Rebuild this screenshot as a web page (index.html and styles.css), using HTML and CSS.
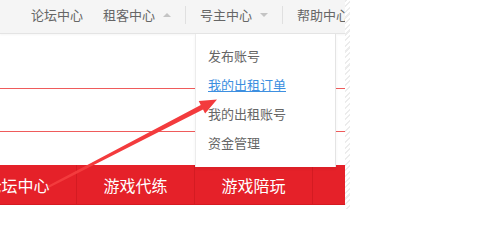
FILE: index.html
```html
<!DOCTYPE html>
<html lang="zh-CN">
<head>
<meta charset="utf-8">
<title>租号</title>
<link rel="stylesheet" href="styles.css">
</head>
<body>
<div class="page">
  <div class="site">
    <div class="topbar">
      <span class="tb-item first">论坛中心</span>
      <span class="tb-item">租客中心</span>
      <span class="caret up"></span>
      <span class="sep"></span>
      <span class="tb-item">号主中心</span>
      <span class="caret down"></span>
      <span class="sep"></span>
      <span class="tb-item">帮助中心</span>
    </div>
    <div class="content">
      <div class="row row1"></div>
      <div class="row row2"></div>
      <div class="row row3"></div>
    </div>
    <div class="nav">
      <span class="nav-item">论坛中心</span>
      <span class="nav-item">游戏代练</span>
      <span class="nav-item">游戏陪玩</span>
      <span class="nav-item"></span>
    </div>
    <ul class="dropdown">
      <li>发布账号</li>
      <li class="active">我的出租订单</li>
      <li>我的出租账号</li>
      <li>资金管理</li>
    </ul>
    <svg class="arrow" width="345" height="209" viewBox="0 0 345 209">
      <polygon points="47.54,186.11 200.75,105.1 198.7,101.1 217,99.5 205.1,113.5 203.05,109.5 48.46,187.89" fill="#f33b3d"/>
    </svg>
  </div>
  <div class="stripe"></div>
</div>
</body>
</html>
```
FILE: styles.css
```css
* { box-sizing: border-box; }
html, body { margin: 0; padding: 0; background: #fff; }
body {
  font-family: "Noto Sans CJK SC", "Noto Sans", sans-serif;
  width: 500px;
  height: 209px;
  overflow: hidden;
}
.page {
  display: flex;
  height: 209px;
}
.site {
  position: relative;
  width: 345px;
  height: 209px;
  overflow: hidden;
  flex: none;
}
.stripe {
  width: 5px;
  height: 209px;
  background: repeating-linear-gradient(135deg, #ececec 0 1.5px, #fff 1.5px 4px);
  flex: none;
}
.topbar {
  height: 34px;
  background: #f5f5f5;
  border-bottom: 1px solid #e4e4e4;
  box-shadow: 0 1px 2px rgba(0,0,0,0.04);
  display: flex;
  align-items: center;
  padding-left: 31px;
  white-space: nowrap;
  font-size: 13px;
  color: #666;
  padding-bottom: 3px;
}
.tb-item { flex: none; line-height: 16px; }
.tb-item + .tb-item { margin-left: 20px; }
.caret {
  width: 0;
  height: 0;
  margin-left: 8px;
  border-left: 4px solid transparent;
  border-right: 4px solid transparent;
  flex: none;
}
.caret.up { border-bottom: 4px solid #c4c4c4; }
.caret.down { border-top: 4px solid #c4c4c4; }
.sep {
  width: 1px;
  height: 18px;
  background: #e0e0e0;
  margin: 0 14px;
  flex: none;
}
.sep + .tb-item { margin-left: 0; }
.content {
  height: 131px;
  display: flex;
  flex-direction: column;
}
.row { flex: none; }
.row1 { height: 55px; border-bottom: 1px solid #ef5b5b; }
.row2 { height: 43px; border-bottom: 1px solid #ef5b5b; }
.row3 { height: 33px; }
.nav {
  height: 40px;
  background: #e52129;
  border-bottom: 1px solid #d51a21;
  display: flex;
  margin-left: -41px;
}
.nav-item {
  flex: none;
  width: 118px;
  border-right: 1px solid #d41b22;
  color: #fff;
  font-size: 16px;
  display: flex;
  align-items: center;
  justify-content: center;
}
.dropdown {
  position: absolute;
  left: 195px;
  top: 34px;
  width: 141px;
  height: 133px;
  margin: 0;
  padding: 7px 0 0 12px;
  list-style: none;
  background: #fff;
  border-left: 1px solid #ececec;
  border-right: 1px solid #e4e4e4;
  box-shadow: 0 2px 3px rgba(0,0,0,0.05);
  z-index: 2;
}
.dropdown li {
  font-size: 13px;
  line-height: 29px;
  color: #666;
}
.dropdown li.active {
  color: #3d8fe0;
  text-decoration: underline;
}
.arrow {
  position: absolute;
  left: 0;
  top: 0;
  z-index: 3;
  pointer-events: none;
}
```
